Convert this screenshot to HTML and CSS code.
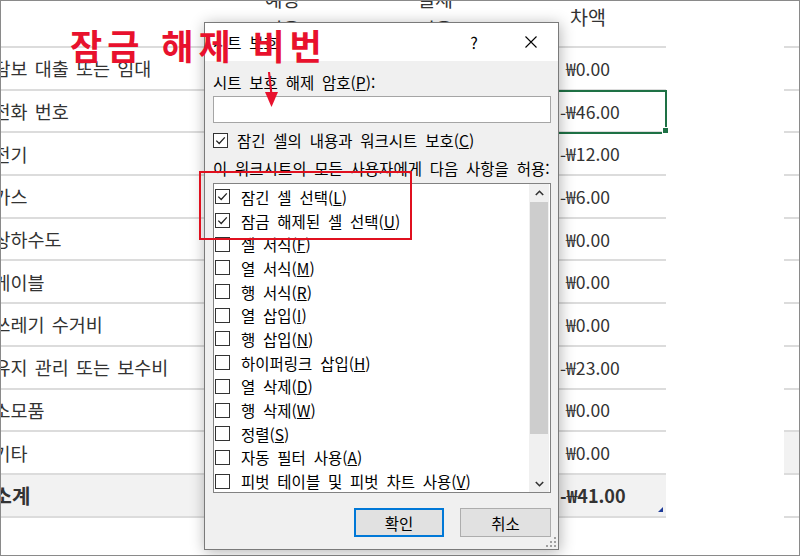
FILE: index.html
```html
<!DOCTYPE html>
<html lang="ko">
<head>
    <meta charset="UTF-8">
    <meta name="viewport" content="width=device-width, initial-scale=1.0">
    <title>시트 보호</title>
    <link rel="stylesheet" href="styles.css">
</head>
<body>
<div class="screen">
    <!-- 워크시트 -->
    <div class="sheet">
        <div class="cell head"></div>
        <div class="cell head"><span class="wrap">예상<br>비용</span></div>
        <div class="cell head"><span class="wrap">실제<br>비용</span></div>
        <div class="cell head"><span class="one">차액</span></div>
        <div class="cell gap"></div>
        <div class="cell head"></div>

        <div class="cell label">담보 대출 또는 임대</div>
        <div class="cell"></div><div class="cell"></div>
        <div class="cell value pos">₩0.00</div>
        <div class="cell gap"></div><div class="cell"></div>

        <div class="cell label">전화 번호</div>
        <div class="cell"></div><div class="cell"></div>
        <div class="cell value selected">-₩46.00</div>
        <div class="cell gap"></div><div class="cell"></div>

        <div class="cell label">전기</div>
        <div class="cell"></div><div class="cell"></div>
        <div class="cell value">-₩12.00</div>
        <div class="cell gap"></div><div class="cell"></div>

        <div class="cell label">가스</div>
        <div class="cell"></div><div class="cell"></div>
        <div class="cell value">-₩6.00</div>
        <div class="cell gap"></div><div class="cell"></div>

        <div class="cell label">상하수도</div>
        <div class="cell"></div><div class="cell"></div>
        <div class="cell value pos">₩0.00</div>
        <div class="cell gap"></div><div class="cell"></div>

        <div class="cell label">케이블</div>
        <div class="cell"></div><div class="cell"></div>
        <div class="cell value pos">₩0.00</div>
        <div class="cell gap"></div><div class="cell"></div>

        <div class="cell label">쓰레기 수거비</div>
        <div class="cell"></div><div class="cell"></div>
        <div class="cell value pos">₩0.00</div>
        <div class="cell gap"></div><div class="cell"></div>

        <div class="cell label">유지 관리 또는 보수비</div>
        <div class="cell"></div><div class="cell"></div>
        <div class="cell value">-₩23.00</div>
        <div class="cell gap"></div><div class="cell"></div>

        <div class="cell label">소모품</div>
        <div class="cell"></div><div class="cell"></div>
        <div class="cell value pos">₩0.00</div>
        <div class="cell gap"></div><div class="cell"></div>

        <div class="cell label">기타</div>
        <div class="cell"></div><div class="cell"></div>
        <div class="cell value pos">₩0.00</div>
        <div class="cell gap"></div><div class="cell shaded"></div>

        <div class="cell label total shaded">소계</div>
        <div class="cell shaded"></div><div class="cell shaded"></div>
        <div class="cell value total shaded corner">-₩41.00</div>
        <div class="cell gap"></div><div class="cell"></div>
    </div>

    <!-- 시트 보호 대화 상자 -->
    <div class="dialog">
        <div class="titlebar">
            <span class="title">시트 보호</span>
            <span class="tb-btn help">?</span>
            <span class="tb-btn close">
                <svg width="12" height="12" viewBox="0 0 12 12"><path d="M0.5 0.5 L11.5 11.5 M11.5 0.5 L0.5 11.5" stroke="#000" stroke-width="1.1"/></svg>
            </span>
        </div>
        <div class="dialog-body">
            <div class="field-label">시트 보호 해제 암호(<u>P</u>):</div>
            <div class="password"></div>
            <div class="check-row">
                <span class="box"><svg width="13" height="13" viewBox="0 0 13 13"><polyline points="2.3,6.6 5.2,9.5 10.8,3.4" fill="none" stroke="#222" stroke-width="1.3"/></svg></span>
                <span>잠긴 셀의 내용과 워크시트 보호(<u>C</u>)</span>
            </div>
            <div class="allow-label">이 워크시트의 모든 사용자에게 다음 사항을 허용:</div>
            <div class="listbox">
                <div class="items">
                    <div class="item"><span class="box"><svg width="13" height="13" viewBox="0 0 13 13"><polyline points="2.3,6.6 5.2,9.5 10.8,3.4" fill="none" stroke="#222" stroke-width="1.3"/></svg></span><span>잠긴 셀 선택(<u>L</u>)</span></div>
                    <div class="item"><span class="box"><svg width="13" height="13" viewBox="0 0 13 13"><polyline points="2.3,6.6 5.2,9.5 10.8,3.4" fill="none" stroke="#222" stroke-width="1.3"/></svg></span><span>잠금 해제된 셀 선택(<u>U</u>)</span></div>
                    <div class="item"><span class="box"></span><span>셀 서식(<u>F</u>)</span></div>
                    <div class="item"><span class="box"></span><span>열 서식(<u>M</u>)</span></div>
                    <div class="item"><span class="box"></span><span>행 서식(<u>R</u>)</span></div>
                    <div class="item"><span class="box"></span><span>열 삽입(<u>I</u>)</span></div>
                    <div class="item"><span class="box"></span><span>행 삽입(<u>N</u>)</span></div>
                    <div class="item"><span class="box"></span><span>하이퍼링크 삽입(<u>H</u>)</span></div>
                    <div class="item"><span class="box"></span><span>열 삭제(<u>D</u>)</span></div>
                    <div class="item"><span class="box"></span><span>행 삭제(<u>W</u>)</span></div>
                    <div class="item"><span class="box"></span><span>정렬(<u>S</u>)</span></div>
                    <div class="item"><span class="box"></span><span>자동 필터 사용(<u>A</u>)</span></div>
                    <div class="item"><span class="box"></span><span>피벗 테이블 및 피벗 차트 사용(<u>V</u>)</span></div>
                </div>
                <div class="scrollbar">
                    <div class="scroll-btn"><svg width="9" height="6" viewBox="0 0 9 6"><polyline points="0.8,5 4.5,1.3 8.2,5" fill="none" stroke="#333" stroke-width="1.6"/></svg></div>
                    <div class="thumb"></div>
                    <div class="track"></div>
                    <div class="scroll-btn"><svg width="9" height="6" viewBox="0 0 9 6"><polyline points="0.8,1 4.5,4.7 8.2,1" fill="none" stroke="#333" stroke-width="1.6"/></svg></div>
                </div>
            </div>
            <div class="buttons">
                <button class="btn default">확인</button>
                <button class="btn">취소</button>
            </div>
        </div>
        <svg class="grip" width="10" height="10" viewBox="0 0 10 10" fill="#a0a0a0">
            <rect x="8" y="0" width="2" height="2"/>
            <rect x="4" y="4" width="2" height="2"/><rect x="8" y="4" width="2" height="2"/>
            <rect x="0" y="8" width="2" height="2"/><rect x="4" y="8" width="2" height="2"/><rect x="8" y="8" width="2" height="2"/>
        </svg>
    </div>

    <!-- 빨간 표시 -->
    <div class="note">잠금 해제 비번</div>
    <svg class="arrow" width="20" height="40" viewBox="0 0 20 40">
        <line x1="5" y1="1" x2="7.5" y2="24" stroke="#e8112d" stroke-width="2.2"/>
        <polygon points="1,21 14,21 7.5,36" fill="#e8112d"/>
    </svg>
    <div class="highlight"></div>
</div>
</body>
</html>
```

FILE: styles.css
```css
/* styles.css */
body {
    margin: 0;
    padding: 0;
    background-color: #fff;
    font-family: "Noto Sans CJK KR", "Noto Sans", sans-serif;
}

.screen {
    position: relative;
    width: 800px;
    height: 556px;
    overflow: hidden;
}

/* 워크시트 */
.sheet {
    box-sizing: border-box;
    width: 800px;
    height: 556px;
    border: 1px solid #8a8a8a;
    display: grid;
    grid-template-columns: 204px 155px 150px 156px 118px 1fr;
    grid-template-rows: 47px repeat(11, 42.7px);
    align-content: start;
    color: #333;
    font-size: 18.5px;
    word-spacing: 2px;
    overflow: hidden;
}

.cell {
    box-sizing: border-box;
    border-bottom: 2px solid #dcdcdc;
    display: flex;
    align-items: center;
    white-space: nowrap;
    position: relative;
}

.cell.gap {
    border-bottom: none;
}

.cell.head {
    align-items: flex-start;
    justify-content: center;
    font-size: 19.5px;
    overflow: visible;
}

.head .wrap {
    display: block;
    text-align: center;
    line-height: 30px;
    margin-top: -17px;
}

.head .one {
    display: block;
    line-height: 30px;
    margin-top: 1px;
}

.label {
    overflow: hidden;
    text-indent: -7.5px;
}

.value {
    padding-left: 50px;
    font-size: 17.6px;
}

.value.pos {
    padding-left: 56px;
}

.total {
    font-weight: bold;
    font-size: 20px;
}

.value.total {
    font-size: 18px;
}

.shaded {
    background-color: #f2f2f2;
}

.selected {
    outline: 2px solid #1e7145;
    outline-offset: -1px;
}

.selected::after {
    content: "";
    position: absolute;
    right: -3px;
    bottom: -3px;
    width: 5px;
    height: 5px;
    background-color: #1e7145;
    border: 1px solid #fff;
}

.corner::after {
    content: "";
    position: absolute;
    right: 3px;
    bottom: 4px;
    width: 0;
    height: 0;
    border-left: 5px solid transparent;
    border-bottom: 5px solid #1f3c99;
}

/* 대화 상자 */
.dialog {
    position: absolute;
    left: 204px;
    top: 22px;
    width: 355px;
    height: 528px;
    box-sizing: border-box;
    border: 1px solid #7a7a7a;
    background-color: #f0f0f0;
    box-shadow: 1px 2px 14px rgba(0, 0, 0, 0.3);
    display: flex;
    flex-direction: column;
    font-size: 15.5px;
    color: #000;
    word-spacing: 3.5px;
}

.titlebar {
    height: 38px;
    flex: none;
    background-color: #fff;
    display: flex;
    align-items: center;
    padding-left: 8px;
}

.title {
    flex: 1;
}

.tb-btn {
    width: 46px;
    height: 38px;
    display: flex;
    align-items: center;
    justify-content: center;
}

.help {
    margin-right: 11px;
    font-size: 16px;
}

.close {
    margin-right: 4px;
}

.dialog-body {
    flex: 1;
    padding: 11px 7px 0 8px;
    display: flex;
    flex-direction: column;
}

.field-label, .allow-label {
    line-height: 20px;
    white-space: nowrap;
}

.password {
    margin-top: 4px;
    height: 27px;
    box-sizing: border-box;
    border: 1px solid #a5a5a5;
    background-color: #fff;
}

.check-row {
    margin-top: 7px;
    height: 20px;
    display: flex;
    align-items: center;
    gap: 9px;
}

.allow-label {
    margin-top: 8px;
}

.box {
    width: 15px;
    height: 15px;
    box-sizing: border-box;
    border: 1px solid #333;
    background-color: #fff;
    flex: none;
    display: flex;
}

.listbox {
    margin-top: 5px;
    height: 310px;
    box-sizing: border-box;
    border: 1px solid #828282;
    background-color: #fff;
    display: flex;
}

.items {
    flex: 1;
    padding: 1px 0 0 1px;
}

.item {
    height: 23.7px;
    display: flex;
    align-items: center;
    gap: 11px;
    white-space: nowrap;
}

.scrollbar {
    width: 20px;
    margin-right: 1px;
    background-color: #f0f0f0;
    display: flex;
    flex-direction: column;
}

.scroll-btn {
    height: 17px;
    display: flex;
    align-items: center;
    justify-content: center;
}

.thumb {
    height: 232px;
    margin: 1px 1px 0;
    background-color: #cdcdcd;
}

.track {
    flex: 1;
}

.buttons {
    margin-top: 15px;
    display: flex;
    justify-content: flex-end;
    gap: 16px;
}

.btn {
    width: 91px;
    height: 29px;
    box-sizing: border-box;
    background-color: #e1e1e1;
    border: 1px solid #adadad;
    font: inherit;
    word-spacing: inherit;
    color: #000;
    padding: 0;
}

.btn.default {
    width: 90px;
    border: 2px solid #0078d7;
}

.grip {
    position: absolute;
    right: 2px;
    bottom: 2px;
}

/* 빨간 표시 */
.note {
    position: absolute;
    left: 70px;
    top: 27px;
    font-size: 35px;
    line-height: 35px;
    font-weight: bold;
    color: #e8112d;
    letter-spacing: 5px;
    word-spacing: 2px;
    white-space: nowrap;
}

.arrow {
    position: absolute;
    left: 264px;
    top: 71px;
}

.highlight {
    position: absolute;
    left: 199px;
    top: 171px;
    width: 213px;
    height: 69px;
    box-sizing: border-box;
    border: 2px solid #e0101f;
}
```
